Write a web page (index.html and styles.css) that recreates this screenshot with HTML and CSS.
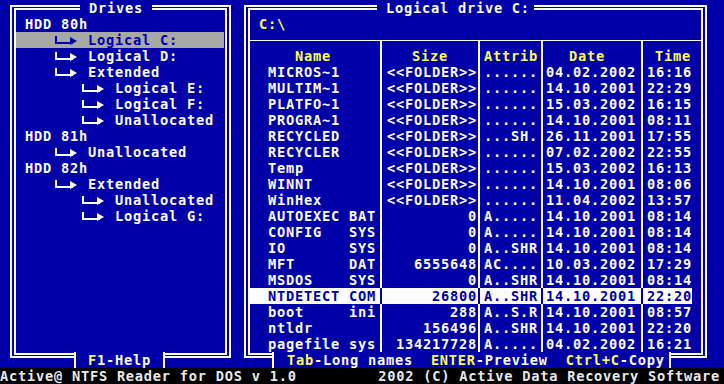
FILE: index.html
```html
<!DOCTYPE html>
<html lang="en">
<head>
    <meta charset="UTF-8">
    <title>Active@ NTFS Reader for DOS</title>
    <link rel="stylesheet" href="styles.css">
</head>
<body>

<div class="screen">
    <div class="panes">
        <section class="frame drives">
            <h2 class="frame-title">Drives</h2>
            <ul class="tree">
                <li class="disk">HDD 80h</li>
                <li class="lvl1 selected"><span class="branch"></span>Logical C:</li>
                <li class="lvl1"><span class="branch"></span>Logical D:</li>
                <li class="lvl1"><span class="branch"></span>Extended</li>
                <li class="lvl2"><span class="branch"></span>Logical E:</li>
                <li class="lvl2"><span class="branch"></span>Logical F:</li>
                <li class="lvl2"><span class="branch"></span>Unallocated</li>
                <li class="disk">HDD 81h</li>
                <li class="lvl1"><span class="branch"></span>Unallocated</li>
                <li class="disk">HDD 82h</li>
                <li class="lvl1"><span class="branch"></span>Extended</li>
                <li class="lvl2"><span class="branch"></span>Unallocated</li>
                <li class="lvl2"><span class="branch"></span>Logical G:</li>
            </ul>
            <div class="frame-keys"><span class="key">F</span>1-Help</div>
        </section>

        <section class="frame files">
            <h2 class="frame-title">Logical drive C:</h2>
            <div class="path">C:\</div>
            <div class="listing">
                <div class="row head">
                    <span class="name">Name</span><span class="size">Size</span><span class="attr">Attrib</span><span class="date">Date</span><span class="time">Time</span>
                </div>
                <div class="row"><span class="name"><span class="base">MICROS~1</span></span><span class="size">&lt;&lt;FOLDER&gt;&gt;</span><span class="attr">......</span><span class="date">04.02.2002</span><span class="time">16:16</span></div>
                <div class="row"><span class="name"><span class="base">MULTIM~1</span></span><span class="size">&lt;&lt;FOLDER&gt;&gt;</span><span class="attr">......</span><span class="date">14.10.2001</span><span class="time">22:29</span></div>
                <div class="row"><span class="name"><span class="base">PLATFO~1</span></span><span class="size">&lt;&lt;FOLDER&gt;&gt;</span><span class="attr">......</span><span class="date">15.03.2002</span><span class="time">16:15</span></div>
                <div class="row"><span class="name"><span class="base">PROGRA~1</span></span><span class="size">&lt;&lt;FOLDER&gt;&gt;</span><span class="attr">......</span><span class="date">14.10.2001</span><span class="time">08:11</span></div>
                <div class="row"><span class="name"><span class="base">RECYCLED</span></span><span class="size">&lt;&lt;FOLDER&gt;&gt;</span><span class="attr">...SH.</span><span class="date">26.11.2001</span><span class="time">17:55</span></div>
                <div class="row"><span class="name"><span class="base">RECYCLER</span></span><span class="size">&lt;&lt;FOLDER&gt;&gt;</span><span class="attr">......</span><span class="date">07.02.2002</span><span class="time">22:55</span></div>
                <div class="row"><span class="name"><span class="base">Temp</span></span><span class="size">&lt;&lt;FOLDER&gt;&gt;</span><span class="attr">......</span><span class="date">15.03.2002</span><span class="time">16:13</span></div>
                <div class="row"><span class="name"><span class="base">WINNT</span></span><span class="size">&lt;&lt;FOLDER&gt;&gt;</span><span class="attr">......</span><span class="date">14.10.2001</span><span class="time">08:06</span></div>
                <div class="row"><span class="name"><span class="base">WinHex</span></span><span class="size">&lt;&lt;FOLDER&gt;&gt;</span><span class="attr">......</span><span class="date">11.04.2002</span><span class="time">13:57</span></div>
                <div class="row"><span class="name"><span class="base">AUTOEXEC</span>BAT</span><span class="size">0</span><span class="attr">A.....</span><span class="date">14.10.2001</span><span class="time">08:14</span></div>
                <div class="row"><span class="name"><span class="base">CONFIG</span>SYS</span><span class="size">0</span><span class="attr">A.....</span><span class="date">14.10.2001</span><span class="time">08:14</span></div>
                <div class="row"><span class="name"><span class="base">IO</span>SYS</span><span class="size">0</span><span class="attr">A..SHR</span><span class="date">14.10.2001</span><span class="time">08:14</span></div>
                <div class="row"><span class="name"><span class="base">MFT</span>DAT</span><span class="size">6555648</span><span class="attr">AC....</span><span class="date">10.03.2002</span><span class="time">17:29</span></div>
                <div class="row"><span class="name"><span class="base">MSDOS</span>SYS</span><span class="size">0</span><span class="attr">A..SHR</span><span class="date">14.10.2001</span><span class="time">08:14</span></div>
                <div class="row selected"><span class="name"><span class="base">NTDETECT</span>COM</span><span class="size">26800</span><span class="attr">A..SHR</span><span class="date">14.10.2001</span><span class="time">22:20</span></div>
                <div class="row"><span class="name"><span class="base">boot</span>ini</span><span class="size">288</span><span class="attr">A..S.R</span><span class="date">14.10.2001</span><span class="time">08:57</span></div>
                <div class="row"><span class="name"><span class="base">ntldr</span></span><span class="size">156496</span><span class="attr">A..SHR</span><span class="date">14.10.2001</span><span class="time">22:20</span></div>
                <div class="row"><span class="name"><span class="base">pagefile</span>sys</span><span class="size">134217728</span><span class="attr">A.....</span><span class="date">04.02.2002</span><span class="time">16:21</span></div>
            </div>
            <div class="frame-keys"><span class="key">Tab</span>-Long names  <span class="key">ENTER</span>-Preview  <span class="key">Ctrl+C</span>-Copy</div>
        </section>
    </div>

    <div class="status">
        <span>Active@ NTFS Reader for DOS v 1.0</span>
        <span>2002 (C) Active Data Recovery Software</span>
    </div>
</div>

</body>
</html>
```

FILE: styles.css
```css
* {
    margin: 0;
    padding: 0;
    box-sizing: border-box;
}

body {
    width: 724px;
    height: 384px;
    overflow: hidden;
    background: #0000a8;
    color: #fcfcfc;
    font-family: "DejaVu Sans Mono", "Liberation Mono", monospace;
    font-weight: bold;
    font-size: 13.7px;
    letter-spacing: 0.75px;
    line-height: 16px;
}

.screen {
    display: flex;
    flex-direction: column;
    height: 384px;
}

.panes {
    display: flex;
    height: 368px;
    padding: 5px 0 0 10px;
}

/* double-line text mode boxes */
.frame {
    position: relative;
    height: 353px;
    border-style: double;
    border-color: #fcfcfc;
    border-width: 5px 6px;
}

.drives {
    width: 221px;
}

.files {
    width: 463px;
    margin-left: 13px;
}

.frame-title {
    position: absolute;
    top: -10px;
    height: 16px;
    padding: 0 9px;
    background: #0000a8;
    font: inherit;
    white-space: pre;
}

.drives .frame-title {
    left: 64px;
}

.files .frame-title {
    left: 127px;
    padding-right: 4px;
}

.frame-keys {
    position: absolute;
    bottom: -15px;
    height: 16px;
    background: #0000a8;
    border-left: 2px solid #fcfcfc;
    border-right: 2px solid #fcfcfc;
    white-space: pre;
}

.drives .frame-keys {
    left: 58px;
    padding: 0 12px;
}

.files .frame-keys {
    left: 22px;
    padding: 0 4px 0 13px;
}

.key {
    color: #fcfc54;
}

/* drive tree */
.tree {
    list-style: none;
    margin-top: 6px;
}

.tree li {
    height: 16px;
    white-space: pre;
}

.tree .disk {
    padding-left: 9px;
}

.tree .lvl1 {
    padding-left: 36px;
}

.tree .lvl2 {
    padding-left: 63px;
}

.tree .selected {
    background: #a8a8a8;
    color: #0000a8;
    margin-right: 1px;
}

.branch {
    display: inline-block;
    position: relative;
    width: 27px;
    height: 16px;
    margin-right: 9px;
    vertical-align: top;
}

.branch::before {
    content: "";
    position: absolute;
    left: 3px;
    top: 4px;
    width: 16px;
    height: 6px;
    border-left: 2px solid currentColor;
    border-bottom: 2px solid currentColor;
}

.branch::after {
    content: "";
    position: absolute;
    left: 18px;
    top: 5px;
    border-left: 7px solid currentColor;
    border-top: 4px solid transparent;
    border-bottom: 4px solid transparent;
}

/* file listing */
.path {
    height: 16px;
    margin-top: 6px;
    padding-left: 9px;
    color: #fcfc54;
}

.listing {
    margin-top: 8px;
    border-top: 1px solid #fcfcfc;
}

.row {
    display: grid;
    grid-template-columns: 130px 98px 63px 100px 51px;
    width: 442px;
    height: 16px;
}

.row > span {
    white-space: pre;
    overflow: hidden;
}

.row > span + span {
    border-left: 2px solid #fcfcfc;
}

.row.selected {
    background: #fcfcfc;
    color: #0000a8;
}

.row.selected > span + span {
    border-left-color: #0000a8;
}

.name {
    padding-left: 18px;
}

.base {
    display: inline-block;
    width: 81px;
}

.size {
    text-align: right;
    padding-right: 1px;
}

.attr {
    padding-left: 4px;
}

.date {
    padding-left: 3px;
}

.time {
    padding-left: 4px;
}

.row.head {
    height: 23px;
    color: #fcfc54;
}

.head > span {
    padding-top: 7px;
}

.head .name {
    padding-left: 45px;
}

.head .size {
    text-align: left;
    padding-left: 30px;
}

.head .date {
    padding-left: 26px;
}

.head .time {
    padding-left: 12px;
}

/* bottom status line */
.status {
    display: flex;
    justify-content: space-between;
    height: 16px;
    padding-right: 4px;
    background: #000;
    color: #e8e8e8;
    white-space: pre;
}
```
